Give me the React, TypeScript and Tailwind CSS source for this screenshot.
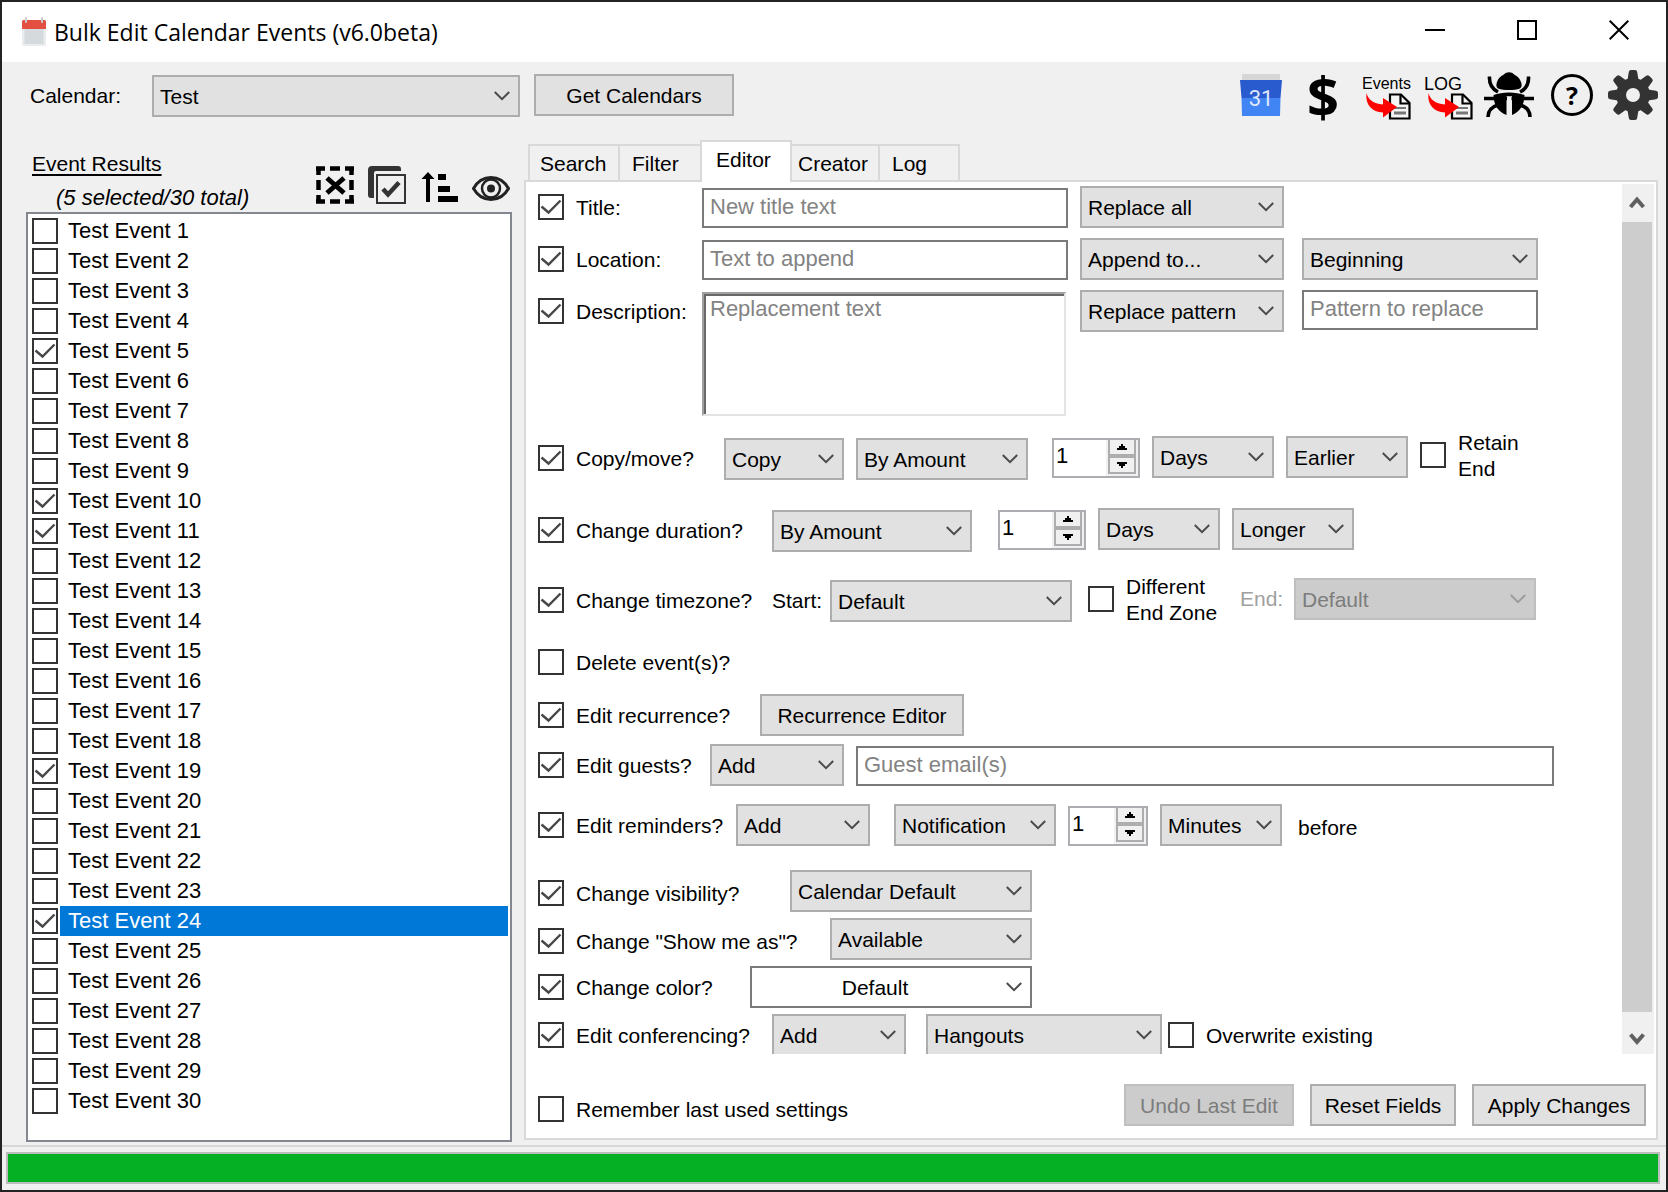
import React from "react";

const FIELD_TEXT = "text-[21px] leading-[26px]";
const PROMPT_TEXT = "text-[22px] leading-[26px]";

function Chevron({ muted = false }: { muted?: boolean }) {
  return (
    <svg
      className="pointer-events-none absolute inset-y-0 right-[9px] my-auto"
      width="18"
      height="12"
      viewBox="0 0 18 12"
      fill="none"
      stroke={muted ? "#9c9c9c" : "#4a4a4a"}
      strokeWidth="2"
      aria-hidden="true"
    >
      <path d="M1.800 2 9 9.200l7.200-7.200" />
    </svg>
  );
}

type ComboProps = {
  label: string;
  value: string;
  className: string;
  disabled?: boolean;
  light?: boolean;
};

function Combo({ label, value, className, disabled, light }: ComboProps) {
  const tone = disabled
    ? "border-[#bfbfbf] bg-[#cccccc] text-[#7c7c7c] pl-[6px]"
    : light
      ? "border-[#7a7a7a] bg-white text-black pr-[32px] [text-align-last:center]"
      : "border-[#adadad] bg-[#e1e1e1] text-black pl-[6px]";
  return (
    <div className={`relative h-[42px] shrink-0 ${className}`}>
      <select
        aria-label={label}
        disabled={disabled}
        defaultValue={value}
        className={`h-full w-full appearance-none rounded-none border-2 pt-[2px] opacity-100 outline-none ${FIELD_TEXT} ${tone}`}
      >
        <option>{value}</option>
      </select>
      <Chevron muted={disabled} />
    </div>
  );
}

function TickBox({ checked, id, label }: { checked?: boolean; id?: string; label?: string }) {
  return (
    <span className="relative block size-[26px] shrink-0">
      <input
        type="checkbox"
        id={id}
        aria-label={label}
        defaultChecked={checked}
        className="peer block size-[26px] appearance-none border-2 border-[#333333] bg-white"
      />
      <svg
        className="pointer-events-none absolute inset-0 hidden peer-checked:block"
        width="26"
        height="26"
        viewBox="0 0 26 26"
        fill="none"
        stroke="#484848"
        strokeWidth="2.4"
        aria-hidden="true"
      >
        <path d="M3.5 12.5 10.5 18.5 22.5 6.5" />
      </svg>
    </span>
  );
}

type CheckProps = { text: React.ReactNode; checked?: boolean; className?: string };

function Check({ text, checked, className = "" }: CheckProps) {
  return (
    <label className={`flex shrink-0 items-center gap-3 whitespace-nowrap ${className}`}>
      <TickBox checked={checked} />
      <span className="pt-[2px]">{text}</span>
    </label>
  );
}

function TextField({ label, placeholder, className }: { label: string; placeholder: string; className: string }) {
  return (
    <input
      type="text"
      aria-label={label}
      placeholder={placeholder}
      className={`h-[40px] rounded-none border-2 border-[#7a7a7a] bg-white pb-[2px] pl-[6px] outline-none placeholder:text-[#838383] ${PROMPT_TEXT} ${className}`}
    />
  );
}

function Spinner({ label, className }: { label: string; className: string }) {
  return (
    <div className={`flex h-[40px] shrink-0 border-2 border-[#abadb3] bg-white ${className}`}>
      <input
        type="number"
        aria-label={label}
        defaultValue={1}
        className={`h-full w-0 flex-1 pb-1 pl-[2px] outline-none [appearance:textfield] ${PROMPT_TEXT}`}
      />
      <div className="flex w-[32px] flex-col bg-[#f0f0f0] pr-[2px] pb-[2px] pl-[2px]">
        <button type="button" aria-label="Increase" className="flex flex-1 items-center justify-center border-x-2 border-b-2 border-[#adadad]">
          <svg width="10" height="6" viewBox="0 0 10 6" aria-hidden="true">
            <path d="M4 0h2v2h2v2h2v2H0V4h2V2h2z" />
          </svg>
        </button>
        <button type="button" aria-label="Decrease" className="flex flex-1 items-center justify-center border-2 border-[#adadad]">
          <svg width="10" height="6" viewBox="0 0 10 6" aria-hidden="true">
            <path d="M0 0h10v2H8v2H6v2H4V4H2V2H0z" />
          </svg>
        </button>
      </div>
    </div>
  );
}

function PushButton({ children, className = "", disabled }: { children: React.ReactNode; className?: string; disabled?: boolean }) {
  const tone = disabled ? "border-[#bfbfbf] bg-[#cccccc] text-[#7c7c7c]" : "border-[#adadad] bg-[#e1e1e1] text-black";
  return (
    <button type="button" disabled={disabled} className={`h-[42px] shrink-0 whitespace-nowrap border-2 pt-[2px] ${tone} ${className}`}>
      {children}
    </button>
  );
}

function TitleBar() {
  return (
    <header className="flex h-[60px] shrink-0 items-center bg-white pl-5">
      <svg width="24" height="30" viewBox="0 0 24 30" aria-hidden="true">
        <rect x="0" y="3" width="24" height="26" rx="1.5" fill="#e9edef" />
        <rect x="2.5" y="12" width="19" height="15" fill="#d5dadd" />
        <path d="M0 4.500A1.500 1.500 0 0 1 1.500 3h21A1.500 1.500 0 0 1 24 4.500V12H0z" fill="#e34f40" />
        <rect x="3" y="0" width="2" height="6" rx="1" fill="#c8cdd0" />
        <rect x="19" y="0" width="2" height="6" rx="1" fill="#c8cdd0" />
      </svg>
      <h1 className="ml-2 flex-1 whitespace-nowrap font-['Open_Sans','Noto_Sans',sans-serif] text-[23px] leading-[30px]">
        Bulk Edit Calendar Events (v6.0beta)
      </h1>
      <div className="flex gap-[52px] pr-[27px] pb-1">
        <button type="button" aria-label="Minimize" className="flex size-10 items-center justify-center">
          <svg width="20" height="20" viewBox="0 0 20 20"><path d="M0 9h20v2H0z" /></svg>
        </button>
        <button type="button" aria-label="Maximize" className="flex size-10 items-center justify-center">
          <svg width="20" height="20" viewBox="0 0 20 20" fill="none" stroke="#000" strokeWidth="2"><path d="M1 1h18v18H1z" /></svg>
        </button>
        <button type="button" aria-label="Close" className="flex size-10 items-center justify-center">
          <svg width="20" height="20" viewBox="0 0 20 20" fill="none" stroke="#000" strokeWidth="2"><path d="M.7.7l18.600 18.600M19.300.7.700 19.300" /></svg>
        </button>
      </div>
    </header>
  );
}

function ExportIcon({ caption, size }: { caption: string; size: string }) {
  return (
    <span className="flex w-[50px] flex-col items-start pt-1 pl-[2px]">
      <span className={`h-[18px] leading-[18px] ${size} font-['Liberation_Sans',sans-serif]`}>{caption}</span>
      <svg width="50" height="27" viewBox="0 0 50 27" aria-hidden="true">
        <path d="M28 1.500h11l8.500 8.500v15.500H28z" fill="#f4f4f4" stroke="#000" strokeWidth="2.200" />
        <path d="M38.500 1.500V10.500h9" fill="none" stroke="#000" strokeWidth="2.200" />
        <path d="M32 14h12v2H32zM32 18.500h12v3H32z" fill="#777" />
        <path d="M4.500 0C6 6 11 11 21 11.500V5l14 9-14 10.500V19.500C10 19 3 12 4.500 0z" fill="#fe0000" />
      </svg>
    </span>
  );
}

function GearIcon() {
  const angles = [0, 45, 90, 135, 180, 225, 270, 315];
  return (
    <svg width="50" height="50" viewBox="0 0 50 50" aria-hidden="true">
      <g fill="#333">
        {angles.map((a) => (
          <path key={a} d="M23 0h4q2 0 2.200 2l1.300 8h-11l1.300-8q.2-2 2.200-2z" transform={`rotate(${a} 25 25)`} />
        ))}
        <circle cx="25" cy="25" r="17" />
      </g>
      <circle cx="25" cy="25" r="7" fill="#f0f0f0" />
    </svg>
  );
}

function BugIcon() {
  return (
    <svg width="50" height="46" viewBox="0 0 50 46" aria-hidden="true">
      <g fill="none" stroke="#000" strokeWidth="3.600">
        <path d="M5.500 4.500C5 12 8 17 14 20M44.500 4.500C45 12 42 17 36 20" />
        <path d="M0 26.500h50" />
        <path d="M14 33C7 35 4 39 4 45M36 33c7 2 10 6 10 12" />
      </g>
      <path d="M21.500 1C24 0 26 0 28.500 1 30 3 35 4 37 10c1 3 1 5-1 6.500-6 2-16 2-22 0C12 15 12 13 13 10 15 4 20 3 21.500 1z" />
      <path d="M9.500 23c9-3.500 22-3.500 31 0 0 10-5 17-12.500 20V24h-5.500v19C14.500 40 9.500 33 9.500 23z" />
      <path d="M23 25h4.500v19H23z" fill="#f0f0f0" />
    </svg>
  );
}

function Toolbar() {
  return (
    <div className="flex h-[58px] shrink-0 items-center pt-2 pr-2 pl-7">
      <label htmlFor="calendar" className="w-[122px] pt-[2px] whitespace-nowrap">Calendar:</label>
      <div className="relative mt-[2px] h-[42px] w-[368px]">
        <select id="calendar" defaultValue="Test" className={`h-full w-full appearance-none rounded-none border-2 border-[#adadad] bg-[#e1e1e1] pt-[2px] pl-[6px] ${FIELD_TEXT}`}>
          <option>Test</option>
        </select>
        <Chevron />
      </div>
      <PushButton className="ml-[14px] w-[200px]">Get Calendars</PushButton>
      <div className="ml-auto flex items-center gap-[12px]">
        <button type="button" aria-label="Open Google Calendar" className="flex size-[50px] items-center justify-center">
          <svg width="42" height="42" viewBox="0 0 42 42" aria-hidden="true">
            <rect x="2" y="0" width="38" height="8" rx="1" fill="#d6d6d6" />
            <path d="M0 6h42l-1.500 18h-39z" fill="#2a5bce" />
            <path d="M1.500 24h39L40 42H2z" fill="#4184f3" />
            <text x="21" y="32" textAnchor="middle" fontFamily="Roboto, sans-serif" fontSize="22" fill="#dfe7fb">31</text>
          </svg>
        </button>
        <button type="button" aria-label="Donate" className="flex size-[50px] items-center justify-center font-['Open_Sans',sans-serif] text-[56px] leading-[46px] font-bold">
          $
        </button>
        <button type="button" aria-label="Export events">
          <ExportIcon caption="Events" size="text-[16px]" />
        </button>
        <button type="button" aria-label="Export log">
          <ExportIcon caption="LOG" size="text-[18px]" />
        </button>
        <button type="button" aria-label="Report a bug" className="flex size-[50px] items-center justify-center">
          <BugIcon />
        </button>
        <button type="button" aria-label="Help" className="flex size-[50px] items-center justify-center pl-[2px]">
          <span className="flex size-[42px] items-center justify-center rounded-full border-[3px] border-black font-['Open_Sans',sans-serif] text-[25px] leading-[36px] font-bold">?</span>
        </button>
        <button type="button" aria-label="Settings">
          <GearIcon />
        </button>
      </div>
    </div>
  );
}

const CHECKED_EVENTS = [5, 10, 11, 19, 24];
const SELECTED_EVENT = 24;

function EventList() {
  const events = Array.from({ length: 30 }, (_, i) => i + 1);
  return (
    <section className="flex w-[486px] shrink-0 flex-col">
      <div className="flex h-[92px] shrink-0 items-end justify-between pr-[2px]">
        <div className="flex flex-col gap-[6px] pl-[6px] leading-7 whitespace-nowrap">
          <h2 className="underline decoration-2 underline-offset-[3px]">Event Results</h2>
          <p className="pl-6 text-[22px] italic">(5 selected/30 total)</p>
        </div>
        <div className="flex gap-[14px] pb-2">
          <button type="button" aria-label="Clear selection">
            <svg width="38" height="38" viewBox="0 0 38 38" fill="none" stroke="#000" aria-hidden="true">
              <path d="M0 2.500h9M14 2.500h10M29 2.500h9M0 35.500h9M14 35.500h10M29 35.500h9" strokeWidth="4.500" />
              <path d="M2.500 1v8M2.500 14v10M2.500 29v8M35.500 1v8M35.500 14v10M35.500 29v8" strokeWidth="4.500" />
              <path d="M11 12l17 15M28 12 11 27" strokeWidth="5" />
            </svg>
          </button>
          <button type="button" aria-label="Select all">
            <svg width="38" height="38" viewBox="0 0 38 38" fill="none" aria-hidden="true">
              <path d="M4 0h26a3 3 0 0 1 3 3v2H8a2 2 0 0 0-2 2v25H3a3 3 0 0 1-3-3V4a4 4 0 0 1 4-4z" fill="#333" />
              <rect x="9" y="9" width="28" height="28" fill="#f0f0f0" stroke="#333" strokeWidth="2" />
              <path d="M15 23l5 5.500 11-12" stroke="#333" strokeWidth="4.500" />
            </svg>
          </button>
          <button type="button" aria-label="Sort">
            <svg width="38" height="38" viewBox="0 0 38 38" aria-hidden="true">
              <path d="M8 6l6.500 7h-4.500v23H6V13H1.500zM18 8h8v6h-8zM18 20h12v6H18zM18 30h20v6H18z" />
            </svg>
          </button>
          <button type="button" aria-label="Preview">
            <svg width="38" height="38" viewBox="0 0 38 38" fill="none" stroke="#222" aria-hidden="true">
              <path d="M1.500 22.500C6 14.500 12 11.500 19 11.500s13 3 17.500 11C32 30.500 26 33.500 19 33.500S6 30.500 1.500 22.500z" strokeWidth="3" />
              <circle cx="19" cy="22.500" r="9" strokeWidth="2.500" />
              <circle cx="19" cy="22.500" r="4" fill="#222" stroke="none" />
            </svg>
          </button>
        </div>
      </div>
      <ul className="min-h-0 flex-1 overflow-hidden border-2 border-[#828790] bg-white py-[2px] pr-[2px] pl-1 text-[22px]">
        {events.map((n) => (
          <li key={n}>
            <label className="flex h-[30px] items-center gap-[2px]">
              <TickBox checked={CHECKED_EVENTS.includes(n)} />
              <span className={`h-[30px] flex-1 pl-2 leading-[30px] ${n === SELECTED_EVENT ? "bg-[#0078d7] text-white" : ""}`}>
                Test Event {n}
              </span>
            </label>
          </li>
        ))}
      </ul>
    </section>
  );
}

function Tabs() {
  const base = "text-left border-[#d9d9d9]";
  return (
    <div role="tablist" className="flex h-[42px] shrink-0 items-end pl-1 pb-[2px]">
      <button role="tab" type="button" className={`${base} h-[36px] w-[90px] border-t-2 border-l-2 pt-[2px] pl-[10px]`}>Search</button>
      <button role="tab" type="button" className={`${base} h-[36px] w-[82px] border-t-2 border-l-2 pt-[2px] pl-[12px]`}>Filter</button>
      <button role="tab" type="button" aria-selected="true" className={`${base} z-10 -mb-[2px] h-[42px] w-[92px] border-x-2 border-t-2 bg-white pb-1 pl-[14px]`}>Editor</button>
      <button role="tab" type="button" className={`${base} h-[36px] w-[86px] border-t-2 pt-[2px] pl-[6px]`}>Creator</button>
      <button role="tab" type="button" className={`${base} h-[36px] w-[82px] border-x-2 border-t-2 pt-[2px] pl-[12px]`}>Log</button>
    </div>
  );
}

function ScrollBar() {
  return (
    <div className="flex w-[32px] shrink-0 flex-col bg-[#f0f0f0]">
      <button type="button" aria-label="Scroll up" className="flex h-[38px] w-[30px] items-center justify-center">
        <svg width="16" height="14" viewBox="0 0 16 14" fill="none" stroke="#606060" strokeWidth="4"><path d="M1.500 11 8 3.500l6.500 7.500" /></svg>
      </button>
      <div className="w-[30px] flex-1 bg-[#cdcdcd]" />
      <button type="button" aria-label="Scroll down" className="flex h-[42px] w-[30px] items-center justify-center pt-3">
        <svg width="16" height="14" viewBox="0 0 16 14" fill="none" stroke="#606060" strokeWidth="4"><path d="M1.500 2.500 8 10l6.500-7.500" /></svg>
      </button>
    </div>
  );
}

function EditorForm() {
  return (
    <form className="min-w-0 flex-1 overflow-hidden pt-[2px] pl-3">
      <div className="flex items-center">
        <Check checked text="Title:" className="w-[164px]" />
        <TextField label="New title" placeholder="New title text" className="mt-[2px] w-[366px]" />
        <Combo label="Title action" value="Replace all" className="ml-3 w-[204px]" />
      </div>
      <div className="mt-[10px] flex items-center">
        <Check checked text="Location:" className="w-[164px]" />
        <TextField label="New location" placeholder="Text to append" className="mt-[2px] w-[366px]" />
        <Combo label="Location action" value="Append to..." className="ml-3 w-[204px]" />
        <Combo label="Append position" value="Beginning" className="ml-[18px] w-[236px]" />
      </div>
      <div className="mt-[10px] flex items-start">
        <Check checked text="Description:" className="h-[42px] w-[164px]" />
        <div className="mt-[2px] h-[124px] w-[364px] border-2 border-[#a0a0a0] border-r-[#e3e3e3] border-b-[#e3e3e3]">
          <textarea
            aria-label="New description"
            placeholder="Replacement text"
            className={`block h-full w-full resize-none border-t-2 border-l-2 border-[#696969] pl-1 outline-none placeholder:text-[#838383] ${PROMPT_TEXT}`}
          />
        </div>
        <Combo label="Description action" value="Replace pattern" className="ml-[14px] w-[204px]" />
        <TextField label="Pattern to replace" placeholder="Pattern to replace" className="ml-[18px] w-[236px]" />
      </div>

      <div className="mt-5 flex h-[44px] items-center">
        <Check checked text="Copy/move?" className="w-[186px]" />
        <Combo label="Copy or move" value="Copy" className="w-[120px] self-end" />
        <Combo label="Copy method" value="By Amount" className="ml-3 w-[172px] self-end" />
        <Spinner label="Copy amount" className="ml-6 w-[88px]" />
        <Combo label="Copy unit" value="Days" className="ml-3 w-[122px] self-start" />
        <Combo label="Copy direction" value="Earlier" className="ml-3 w-[122px] self-start" />
        <Check text={<>Retain<br />End</>} className="ml-3 h-[38px] self-start" />
      </div>

      <div className="mt-7 flex h-[44px] items-center">
        <Check checked text="Change duration?" className="w-[234px]" />
        <Combo label="Duration method" value="By Amount" className="w-[200px] self-end" />
        <Spinner label="Duration amount" className="ml-[26px] w-[88px]" />
        <Combo label="Duration unit" value="Days" className="ml-3 w-[122px] self-start" />
        <Combo label="Duration direction" value="Longer" className="ml-3 w-[122px] self-start" />
      </div>

      <div className="mt-[26px] flex h-[44px] items-center">
        <Check checked text="Change timezone?" className="w-[234px]" />
        <span className="w-[58px] pt-[2px]">Start:</span>
        <Combo label="Start timezone" value="Default" className="w-[242px] self-end" />
        <Check text={<>Different<br />End Zone</>} className="ml-4 h-[42px] w-[152px] self-start" />
        <span className="w-[54px] self-start leading-[42px] text-[#a0a0a0]">End:</span>
        <Combo label="End timezone" value="Default" disabled className="w-[242px] self-start" />
      </div>

      <div className="mt-[26px] flex">
        <Check text="Delete event(s)?" />
      </div>

      <div className="mt-[18px] flex items-center">
        <Check checked text="Edit recurrence?" className="w-[222px]" />
        <PushButton className="w-[204px]">Recurrence Editor</PushButton>
      </div>

      <div className="mt-2 flex items-center">
        <Check checked text="Edit guests?" className="w-[172px]" />
        <Combo label="Guest action" value="Add" className="w-[134px]" />
        <TextField label="Guest emails" placeholder="Guest email(s)" className="mt-[2px] mr-[68px] ml-3 min-w-0 flex-1" />
      </div>

      <div className="mt-[18px] flex items-center">
        <Check checked text="Edit reminders?" className="w-[198px]" />
        <Combo label="Reminder action" value="Add" className="w-[134px]" />
        <Combo label="Reminder type" value="Notification" className="ml-6 w-[162px]" />
        <Spinner label="Reminder amount" className="mt-[2px] ml-3 w-[80px]" />
        <Combo label="Reminder unit" value="Minutes" className="ml-3 w-[122px]" />
        <span className="ml-4 pt-[6px]">before</span>
      </div>

      <div className="mt-6 flex items-center">
        <Check checked text="Change visibility?" className="w-[252px] pt-1" />
        <Combo label="Visibility" value="Calendar Default" className="w-[242px]" />
      </div>
      <div className="mt-[6px] flex items-center">
        <Check checked text={'Change "Show me as"?'} className="w-[292px] pt-1" />
        <Combo label="Show me as" value="Available" className="w-[202px]" />
      </div>
      <div className="mt-[6px] flex items-center">
        <Check checked text="Change color?" className="w-[212px]" />
        <Combo label="Color" value="Default" light className="w-[282px]" />
      </div>
      <div className="mt-[6px] flex items-center">
        <Check checked text="Edit conferencing?" className="w-[234px]" />
        <Combo label="Conferencing action" value="Add" className="w-[134px]" />
        <Combo label="Conferencing service" value="Hangouts" className="ml-5 w-[236px]" />
        <Check text="Overwrite existing" className="ml-[6px]" />
      </div>
    </form>
  );
}

function EditorPanel() {
  return (
    <section className="mb-[2px] flex min-w-0 flex-1 flex-col pt-5">
      <Tabs />
      <div className="-mt-[2px] flex min-h-0 flex-1 flex-col border-2 border-[#d9d9d9] bg-white pt-[2px]">
        <div className="flex min-h-0 flex-1 pr-[2px]">
          <EditorForm />
          <ScrollBar />
        </div>
        <div className="flex h-[84px] shrink-0 items-center gap-4 pt-[18px] pr-[10px] pl-3">
          <Check text="Remember last used settings" className="mr-auto pt-2" />
          <PushButton disabled className="w-[170px]">Undo Last Edit</PushButton>
          <PushButton className="w-[146px]">Reset Fields</PushButton>
          <PushButton className="w-[174px]">Apply Changes</PushButton>
        </div>
      </div>
    </section>
  );
}

export default function App() {
  return (
    <div className="flex h-screen flex-col overflow-hidden border-2 border-[#232323] bg-[#f0f0f0] font-['Liberation_Sans',Arial,sans-serif] text-[21px] leading-[26px] text-black">
      <TitleBar />
      <Toolbar />
      <main className="flex min-h-0 flex-1 gap-3 pr-2 pl-6">
        <EventList />
        <EditorPanel />
      </main>
      <footer className="mt-[3px] shrink-0 border-t-2 border-[#d7d7d7] pt-[5px] pr-[6px] pb-[6px] pl-1">
        <div role="progressbar" aria-label="Progress" aria-valuenow={100} className="h-8 border-2 border-[#bcbcbc] bg-[#06b025]" />
      </footer>
    </div>
  );
}
